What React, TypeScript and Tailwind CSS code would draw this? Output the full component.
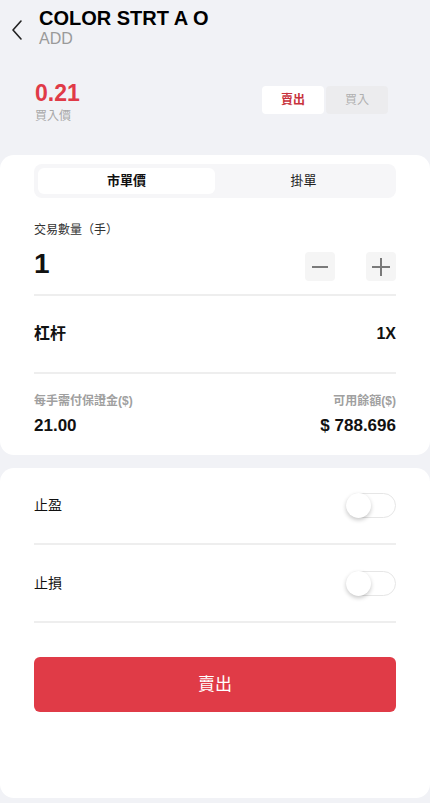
import React from "react";

const font = { fontFamily: '"Liberation Sans", "Noto Sans CJK TC", Arial, sans-serif' };

function Toggle() {
  return (
    <div className="relative h-[25px] w-[50px] rounded-full border border-[#e6e6e6] bg-white">
      <div className="absolute left-[-1px] top-[-1px] h-[25px] w-[25px] rounded-full bg-white shadow-[0_2px_4px_rgba(0,0,0,0.22)]" />
    </div>
  );
}

export default function App() {
  return (
    <div style={font} className="flex min-h-[803px] w-[430px] flex-col bg-[#f1f2f6] text-[#111]">
      {/* Header */}
      <div className="flex items-start pt-[6px]">
        <div className="ml-[10px] mt-[13px] w-[29px]">
          <svg width="14" height="22" viewBox="0 0 14 22" fill="none">
            <polyline points="11,2 3,11 11,20" stroke="#222" strokeWidth="1.6" strokeLinecap="round" strokeLinejoin="round" />
          </svg>
        </div>
        <div className="flex flex-col">
          <div className="text-[20px] font-bold leading-[24px] text-black">COLOR STRT A O</div>
          <div className="text-[16px] leading-[18px] text-[#9a9a9a]">ADD</div>
        </div>
      </div>

      {/* Price */}
      <div className="mt-[32px] flex items-start justify-between px-[35px]">
        <div className="flex flex-col">
          <div className="text-[23px] font-bold leading-[26px] text-[#e03a47]">0.21</div>
          <div className="mt-[2px] text-[12px] leading-[16px] text-[#a8a8a8]">買入價</div>
        </div>
        <div className="mr-[7px] mt-[6px] flex gap-[2px]">
          <div className="flex h-[28px] w-[62px] items-center justify-center rounded-[4px] bg-white text-[12px] font-bold text-[#c8323c]">
            賣出
          </div>
          <div className="flex h-[28px] w-[62px] items-center justify-center rounded-[4px] bg-[#ececee] text-[12px] text-[#b0b0b0]">
            買入
          </div>
        </div>
      </div>

      {/* Card 1 */}
      <div className="mt-[31px] rounded-[14px] bg-white px-[34px] pb-[19px] pt-[9px]">
        <div className="flex h-[34px] rounded-[8px] bg-[#f6f6f8] p-[4px]">
          <div className="flex flex-1 items-center justify-center rounded-[6px] bg-white text-[13px] font-semibold">市單價</div>
          <div className="flex flex-1 items-center justify-center text-[13px] text-[#222]">掛單</div>
        </div>

        <div className="mt-[24px] text-[12px] leading-[16px] text-[#333]">交易數量（手）</div>
        <div className="mt-[14px] flex items-start justify-between">
          <div className="text-[28px] font-bold leading-[24px]">1</div>
          <div className="flex gap-[31px]">
            <div className="flex h-[29px] w-[30px] items-center justify-center rounded-[4px] bg-[#f5f5f5]">
              <div className="h-[2px] w-[16px] bg-[#7a7a7a]" />
            </div>
            <div className="relative flex h-[29px] w-[30px] items-center justify-center rounded-[4px] bg-[#f5f5f5]">
              <div className="h-[2px] w-[18px] bg-[#7a7a7a]" />
              <div className="absolute h-[18px] w-[2px] bg-[#7a7a7a]" />
            </div>
          </div>
        </div>
        <div className="mt-[13px] h-[2px] bg-[#eeeeee]" />

        <div className="flex items-center justify-between py-[28px]">
          <div className="text-[16px] font-semibold leading-[20px]">杠杆</div>
          <div className="text-[16px] font-bold leading-[20px]">1X</div>
        </div>
        <div className="h-[2px] bg-[#eeeeee]" />

        <div className="mt-[19px] flex justify-between text-[12px] font-bold leading-[16px] text-[#a0a0a0]">
          <span>每手需付保證金($)</span>
          <span>可用餘額($)</span>
        </div>
        <div className="mt-[7px] flex justify-between text-[17px] font-bold leading-[20px]">
          <span>21.00</span>
          <span>$ 788.696</span>
        </div>
      </div>

      {/* Card 2 */}
      <div className="mt-[13px] h-[330px] rounded-[14px] bg-white px-[34px]">
        <div className="flex h-[75px] items-center justify-between">
          <span className="text-[14px] text-[#111]">止盈</span>
          <Toggle />
        </div>
        <div className="h-[2px] bg-[#eeeeee]" />
        <div className="flex h-[76px] items-center justify-between">
          <span className="text-[14px] text-[#111]">止損</span>
          <Toggle />
        </div>
        <div className="h-[2px] bg-[#eeeeee]" />
        <div className="mt-[34px] flex h-[55px] items-center justify-center rounded-[6px] bg-[#e03b47] text-[17px] text-white">
          賣出
        </div>
      </div>
    </div>
  );
}
